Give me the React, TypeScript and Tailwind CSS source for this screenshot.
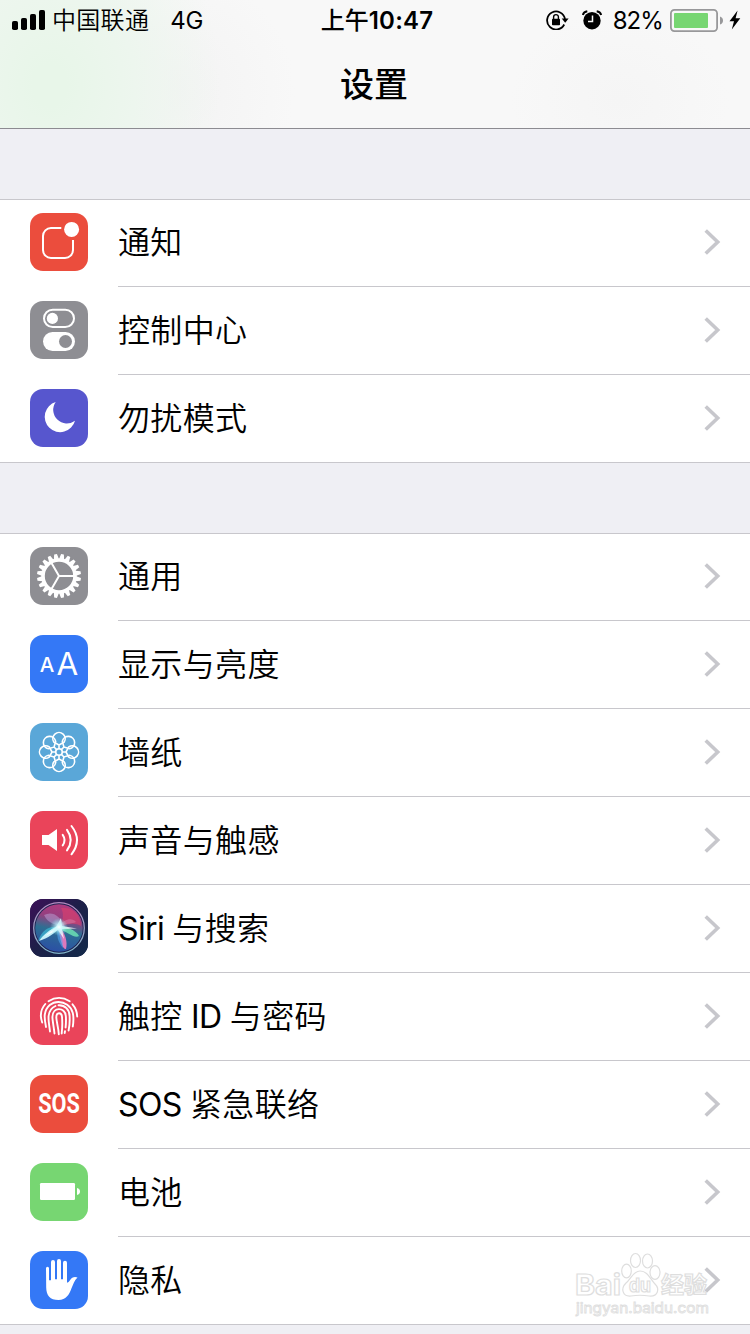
import type { ReactNode } from "react";

type Item = {
    label: string;
    color: string;
    icon: ReactNode;
};

const angles = (count: number, offset = 0) =>
    Array.from({ length: count }, (_, i) => offset + (i * 360) / count);

const line = {
    fill: "none",
    stroke: "#fff",
    strokeWidth: 2,
    strokeLinecap: "round" as const,
};

const SiriIcon = () => (
    <>
        <defs>
            <linearGradient id="siri-bg" x1="0" y1="0" x2="1" y2="1">
                <stop offset="0" stopColor="#3c1058" />
                <stop offset="0.5" stopColor="#1c2048" />
                <stop offset="1" stopColor="#122a4a" />
            </linearGradient>
            <linearGradient id="siri-orb" x1="0.6" y1="0" x2="0.4" y2="1">
                <stop offset="0" stopColor="#b03a80" />
                <stop offset="0.3" stopColor="#93407f" />
                <stop offset="0.55" stopColor="#2d6f93" />
                <stop offset="1" stopColor="#2b4fa5" />
            </linearGradient>
            <linearGradient id="siri-ring" x1="0" y1="0" x2="0" y2="1">
                <stop offset="0" stopColor="#b58ac0" />
                <stop offset="1" stopColor="#7fb4c8" />
            </linearGradient>
            <radialGradient id="siri-glow">
                <stop offset="0" stopColor="#fff" />
                <stop offset="0.3" stopColor="#c9fbff" stopOpacity="0.8" />
                <stop offset="1" stopColor="#7fe6ee" stopOpacity="0" />
            </radialGradient>
        </defs>
        <rect width="58" height="58" fill="url(#siri-bg)" />
        <circle cx="29" cy="29" r="25.3" fill="#1d2150" stroke="url(#siri-ring)" strokeWidth="1.3" />
        <circle cx="29" cy="29" r="23.8" fill="url(#siri-orb)" />
        <path d="M31 9C42 7 51 16 51 27C46 24 38 24 31 28C33 20 34 14 31 9Z" fill="#e0406a" opacity="0.6" />
        <path d="M14 16C22 12 30 16 35 28C27 26 18 25 14 16Z" fill="#b9a3d8" opacity="0.5" />
        <path d="M28 28C34 20 42 18 46 23C42 25 34 24 28 28Z" fill="#e49ac0" opacity="0.35" />
        <path d="M29 28C19 27 12 31 8 42C17 38 23 35 29 28Z" fill="#41c8e0" opacity="0.6" />
        <path d="M28 27C20 30 13 36 9 42C18 39 25 34 30 29Z" fill="#d4fbff" opacity="0.9" />
        <path d="M28 27C36 27 46 31 49 37C45 40 35 32 28 29Z" fill="#6ce0b4" opacity="0.85" />
        <path d="M29 28C35 33 38 43 36 50C32 51 30 38 28 29Z" fill="#f07cc0" opacity="0.9" />
        <path d="M28 29C26 36 28 43 33 49C33 41 31 34 29 29Z" fill="#54a4ee" opacity="0.6" />
        <path d="M31 19L32 27L47 29.5L32 30L34 40L28 31L15 37L26 28Z" fill="#fff" opacity="0.8" />
        <circle cx="29" cy="28" r="9" fill="url(#siri-glow)" />
    </>
);

const deviceItems: Item[] = [
    {
        label: "通知",
        color: "#eb4d3d",
        icon: (
            <>
                <path d="M31.3 15H21a8 8 0 0 0-8 8V37a8 8 0 0 0 8 8H35a8 8 0 0 0 8-8V27" {...line} strokeLinecap="butt" />
                <circle cx="41.6" cy="16.4" r="7.5" fill="#fff" />
            </>
        ),
    },
    {
        label: "控制中心",
        color: "#8e8e93",
        icon: (
            <>
                <rect x="14" y="8.7" width="30" height="17.4" rx="8.7" {...line} />
                <circle cx="22.4" cy="17.4" r="5.6" fill="#fff" />
                <rect x="13" y="31" width="32" height="19" rx="9.5" fill="#fff" />
                <circle cx="35.5" cy="40.5" r="6.5" fill="#8e8e93" />
            </>
        ),
    },
    {
        label: "勿扰模式",
        color: "#5756ce",
        icon: <path d="M25.7 13A15.4 15.4 0 1 0 45 31.7A13.6 13.6 0 0 1 25.7 13Z" fill="#fff" />,
    },
];

const generalItems: Item[] = [
    {
        label: "通用",
        color: "#8e8e93",
        icon: (
            <g transform="translate(29 29)">
                <circle r="16" {...line} strokeWidth="3.6" />
                {angles(20, 9).map((a) => (
                    <path key={a} d="M-2.5-17L-1.4-22H1.4L2.5-17Z" fill="#fff" transform={`rotate(${a})`} />
                ))}
                {angles(3, 90).map((a) => (
                    <path key={a} d="M0 0V-15" {...line} transform={`rotate(${a})`} />
                ))}
            </g>
        ),
    },
    {
        label: "显示与亮度",
        color: "#3478f6",
        icon: (
            <g fill="#fff" fontFamily="Inter, sans-serif" textAnchor="middle">
                <text x="17" y="37.3" fontSize="20.5" fontWeight="500">A</text>
                <text x="37.3" y="39.7" fontSize="31.5">A</text>
            </g>
        ),
    },
    {
        label: "墙纸",
        color: "#5aa7d8",
        icon: (
            <g transform="translate(29 29)">
                {angles(8).map((a) => (
                    <path
                        key={a}
                        d="M0-3.3V-7L-5.1-9.8A6.2 6.2 0 1 1 5.1-9.8L0-7"
                        {...line}
                        strokeWidth="1.6"
                        transform={`rotate(${a})`}
                    />
                ))}
                <circle r="3.3" {...line} strokeWidth="1.6" />
            </g>
        ),
    },
    {
        label: "声音与触感",
        color: "#ea445a",
        icon: (
            <>
                <path d="M12 24H18.5L27 18V40L18.5 34H12Z" fill="#fff" />
                <path d="M32.7 23.8Q36.4 29 32.7 34.4M37 18.8Q44.4 29 37 39.4M41.5 15Q52.5 29 41.5 43.3" {...line} />
            </>
        ),
    },
    { label: "Siri 与搜索", color: "#1c2048", icon: <SiriIcon /> },
    {
        label: "触控 ID 与密码",
        color: "#ea445a",
        icon: (
            <g {...line} strokeWidth="1.9">
                <path d="M18.5 14.2Q29 7.6 39.7 14.2" />
                <path d="M15.3 17Q8.4 25 12.2 35.5" />
                <path d="M42.5 17.3Q47 22.5 47.2 29.5" />
                <path d="M16 40C15 35 14.3 31 14.8 27.5C17.5 10.5 39 11.5 42.8 26C43.7 30 43.5 35 42.8 39.5" />
                <path d="M20 44.5C19.3 39 18.2 33 18.6 29C19.2 23.5 22 20.5 25.5 19" />
                <path d="M28.5 18.2C35 17.8 39.5 23 39.6 29C39.9 34 39.5 39 38.6 43.5" />
                <path d="M24.5 46.5C24 41 22.5 34 22.4 30C22.6 19.5 35 19.8 35.8 29C36.2 33 36 36.5 35.6 40.5M35 44.2L34.7 46" />
                <path d="M28.8 47.2C28.5 41 26.5 35 26.3 30.5C26.3 25 31.7 25 32 30C32.5 36 32.3 41 31.7 46.5" />
            </g>
        ),
    },
    {
        label: "SOS 紧急联络",
        color: "#eb4d3d",
        icon: (
            <text
                x="8.2"
                y="38.4"
                fill="#fff"
                fontFamily="Roboto, sans-serif"
                fontWeight="700"
                fontSize="27"
                textLength="41.6"
                lengthAdjust="spacingAndGlyphs"
            >
                SOS
            </text>
        ),
    },
    {
        label: "电池",
        color: "#77d672",
        icon: (
            <g fill="#fff">
                <rect x="10" y="20" width="35" height="17" rx="1.3" />
                <path d="M47 25Q50 25.6 50 28.5T47 32Z" />
            </g>
        ),
    },
    {
        label: "隐私",
        color: "#3478f6",
        icon: (
            <path
                fill="#fff"
                d="M16 17.2a1.5 1.5 0 0 1 3 0V29.3H21V11a2 2 0 0 1 4 0V28.3H27V10a2 2 0 0 1 4 0V28.3H33V11.7a2 2 0 0 1 4 0V31.8Q38.7 31.5 40 29.3C41.8 26.5 44.5 25.3 47.5 26.6C44 30 43.3 33.5 41.5 37.3C39 44 36 49 28.5 49C20 49 16.3 44.5 16.2 36.5Z"
            />
        ),
    },
];

// Latin runs are set tighter than the Chinese around them
function Label({ text }: { text: string }) {
    return (
        <span className="relative top-px text-[32px] leading-none font-[350] tracking-[0.35px] whitespace-pre">
            {text.split(/([A-Za-z ]+)/).map((part, i) =>
                i % 2 ? (
                    <span key={i} className="font-normal tracking-[-0.65px]">{part}</span>
                ) : (
                    part
                ),
            )}
        </span>
    );
}

function Row({ item, last }: { item: Item; last: boolean }) {
    return (
        <div className="flex h-[88px] pl-[30px]">
            <svg viewBox="0 0 58 58" className="mt-3.5 size-[58px] shrink-0 rounded-[13px]" style={{ background: item.color }}>
                {item.icon}
            </svg>
            <div
                className={`ml-[30px] flex flex-1 items-center justify-between border-b pr-[29px] pb-px ${last ? "border-transparent" : "border-[#c8c7cc]"}`}
            >
                <Label text={item.label} />
                <svg viewBox="0 0 17 26" className="h-[26px] w-[17px]" fill="none" stroke="#c7c7cc" strokeWidth="3.6">
                    <path d="M1.7 1.5L13.7 13L1.7 24.5" />
                </svg>
            </div>
        </div>
    );
}

function Group({ items }: { items: Item[] }) {
    return (
        <section className="bg-white shadow-[inset_0_1px_0_#c8c7cc,inset_0_-1px_0_#c8c7cc]">
            {items.map((item, i) => (
                <Row key={item.label} item={item} last={i === items.length - 1} />
            ))}
        </section>
    );
}

function StatusBar() {
    return (
        <div className="grid h-10 grid-cols-[1fr_auto_1fr] items-center text-[24px] leading-none">
            <div className="flex items-center pl-3">
                <svg viewBox="0 0 33 20" className="h-5 w-[33px]">
                    <rect x="0" y="11" width="6" height="9" rx="1.8" />
                    <rect x="9" y="8" width="6" height="12" rx="1.8" />
                    <rect x="18" y="4" width="6" height="16" rx="1.8" />
                    <rect x="27" y="0" width="6" height="20" rx="1.8" />
                </svg>
                <span className="mt-0.5 ml-[7px] font-[350] tracking-[0.3px]">中国联通</span>
                <span className="mt-0.5 ml-[21px] tracking-[-0.3px]">4G</span>
            </div>
            <div className="mt-0.5 pl-1 font-medium">
                上午<span className="font-semibold tracking-[0.2px]">10:47</span>
            </div>
            <div className="flex items-center justify-end pr-[9px]">
                {/* rotation lock */}
                <svg viewBox="0 0 23 20" className="h-5 w-[23px]">
                    <path d="M18.2 14.5A9 9 0 1 1 19 9" fill="none" stroke="#000" strokeWidth="1.8" />
                    <path d="M15.7 8.5H22.6L19.2 12.8Z" />
                    <rect x="6" y="8.7" width="8" height="6.5" rx="0.8" />
                    <path d="M7.6 9V7a2.4 2.4 0 0 1 4.8 0V9" fill="none" stroke="#000" strokeWidth="1.4" />
                </svg>
                {/* alarm */}
                <svg viewBox="0 0 20 20" className="ml-[13px] h-5 w-5">
                    <circle cx="10" cy="10.7" r="8.7" />
                    <path d="M0.8 5Q1.5 1.8 5.3 1.2M19.2 5Q18.5 1.8 14.7 1.2" fill="none" stroke="#000" strokeWidth="2" />
                    <path d="M10.5 5.5V11.5H6" fill="none" stroke="#f8f8f8" strokeWidth="1.5" />
                </svg>
                <span className="mt-0.5 ml-[11px] tracking-[-0.9px]">82%</span>
                <svg viewBox="0 0 53 23" className="ml-[7px] h-[23px] w-[53px]">
                    <rect x="0.9" y="0.9" width="46.2" height="21.2" rx="3.5" fill="none" stroke="#98989a" strokeWidth="1.8" />
                    <rect x="4" y="4" width="34" height="15" rx="1" fill="#77d672" />
                    <path d="M50 7.5Q53 8.5 53 11.5T50 15.5Z" fill="#98989a" />
                </svg>
                <svg viewBox="0 0 12 20" className="ml-1.5 h-5 w-3">
                    <path d="M8.6 0.5L0.5 11.2H5L2.8 19.5L11.3 8.2H6.6Z" />
                </svg>
            </div>
        </div>
    );
}

function Watermark() {
    return (
        <svg
            viewBox="0 0 140 66"
            className="pointer-events-none absolute top-[1251px] left-[573px] h-[66px] w-[140px]"
            fill="#fff"
            fillOpacity="0.8"
            stroke="#dedede"
            strokeWidth="1.2"
            fontFamily='Inter, "Noto Sans CJK SC", sans-serif'
            fontWeight="700"
        >
            <text x="2" y="44" fontSize="29" textLength="46" lengthAdjust="spacingAndGlyphs">Bai</text>
            <ellipse cx="53.5" cy="20" rx="4.8" ry="6.8" />
            <ellipse cx="62.5" cy="9.5" rx="5" ry="7" />
            <ellipse cx="74.5" cy="10" rx="5" ry="7" />
            <ellipse cx="82" cy="21.5" rx="5" ry="6.8" />
            <path d="M67 20C60 20 58 28 53 32C47 38 50 46 58 45C64 44 70 44 76 45C85 46 87 38 82 33C77 28 75 20 67 20Z" />
            <text x="56" y="41" fontSize="19" textLength="22" lengthAdjust="spacingAndGlyphs">du</text>
            <text x="88" y="42" fontSize="23" textLength="46" lengthAdjust="spacingAndGlyphs">经验</text>
            <text
                x="3"
                y="61.5"
                fontSize="14"
                fontWeight="400"
                strokeWidth="0.8"
                textLength="133"
                lengthAdjust="spacingAndGlyphs"
            >
                jingyan.baidu.com
            </text>
        </svg>
    );
}

export default function App() {
    return (
        <div className='relative h-[1334px] w-[750px] overflow-hidden bg-[#efeff4] font-[Inter,"Noto_Sans_CJK_SC",sans-serif] text-black'>
            {/* Navigation bar */}
            <header className="h-[129px] border-b border-[#8c8b91] bg-[#f8f8f8] bg-[radial-gradient(ellipse_170px_210px_at_50px_85px,#e8f6e9_10%,#edf6ee_50%,transparent),radial-gradient(ellipse_120px_120px_at_175px_90px,#f3f3f3,transparent),radial-gradient(ellipse_110px_90px_at_620px_100px,#f5f5f5,transparent)]">
                <StatusBar />
                <h1 className="mt-[28px] pr-0.5 text-center text-[34px] leading-[34px] font-medium">设置</h1>
            </header>

            {/* Settings list */}
            <main className="flex flex-col gap-[70px] pt-[70px]">
                <Group items={deviceItems} />
                <Group items={generalItems} />
            </main>

            <Watermark />
        </div>
    );
}
